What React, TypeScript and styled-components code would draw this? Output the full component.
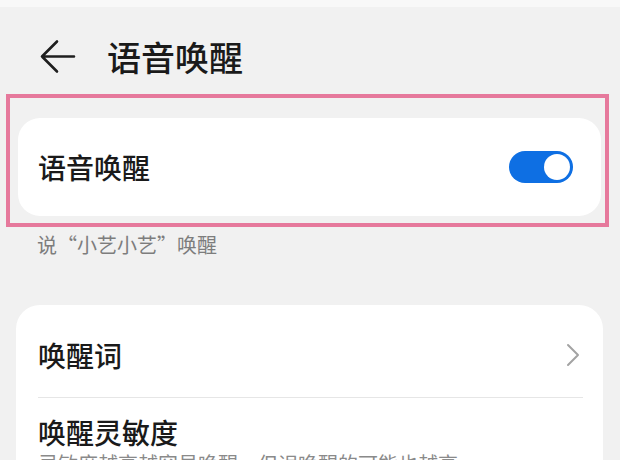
import { createGlobalStyle, styled } from 'styled-components';

const GlobalStyle = createGlobalStyle`
  html, body {
    margin: 0;
    padding: 0;
    background: #f1f1f1;
  }
  body {
    font-family: 'Noto Sans CJK SC', 'Noto Sans', sans-serif;
    color: #1a1a1a;
  }
`;

interface ToggleProps {
  on?: boolean;
}

const BackIcon = () => (
  <svg width="36" height="36" viewBox="0 0 36 36" fill="none">
    <path
      d="M34 17.5H2M17 2.5L2 17.5L17 32.5"
      stroke="#1f1f1f"
      strokeWidth="2.6"
      strokeLinecap="round"
      strokeLinejoin="round"
    />
  </svg>
);

const ChevronIcon = () => (
  <svg width="14" height="24" viewBox="0 0 14 24" fill="none">
    <path
      d="M2 2L12 12L2 22"
      stroke="#a3a3a3"
      strokeWidth="2"
      strokeLinecap="round"
      strokeLinejoin="round"
    />
  </svg>
);

const App = () => {
  return (
    <>
      <GlobalStyle />
      <Page>
        <TopStrip />
        <Header>
          <BackIcon />
          <Title>语音唤醒</Title>
        </Header>

        <Highlight>
          <SwitchCard>
            <ItemLabel>语音唤醒</ItemLabel>
            <Toggle on>
              <Knob />
            </Toggle>
          </SwitchCard>
        </Highlight>
        <Hint>说“小艺小艺”唤醒</Hint>

        <ListCard>
          <LinkRow>
            <ItemLabel>唤醒词</ItemLabel>
            <ChevronIcon />
          </LinkRow>
          <Divider />
          <DetailRow>
            <ItemLabel>唤醒灵敏度</ItemLabel>
            <Description>灵敏度越高越容易唤醒，但误唤醒的可能也越高</Description>
          </DetailRow>
        </ListCard>
      </Page>
    </>
  );
};

const Page = styled.div`
  width: 620px;
  height: 460px;
  overflow: hidden;
  background: #f1f1f1;
`;

const TopStrip = styled.div`
  height: 7px;
  background: #f8f8f8;
`;

const Header = styled.div`
  height: 74px;
  padding: 13px 0 0 40px;
  display: flex;
  align-items: center;
  gap: 31px;
`;

const Title = styled.h1`
  margin: 0;
  font-size: 34px;
  font-weight: 500;
  line-height: 1.2;
  color: #1a1a1a;
`;

const Highlight = styled.div`
  margin: 0 11px 0 6px;
  border: 4px solid #e6799c;
  padding: 20px 4px 7px 8px;
`;

const SwitchCard = styled.div`
  height: 98px;
  padding: 0 28px 0 20px;
  background: #ffffff;
  border-radius: 22px;
  display: flex;
  align-items: center;
  justify-content: space-between;
`;

const ItemLabel = styled.div`
  font-size: 28px;
  font-weight: 500;
  line-height: 28px;
  color: #1a1a1a;
`;

const Toggle = styled.div<ToggleProps>`
  width: 64px;
  height: 32px;
  box-sizing: border-box;
  padding: 3px;
  border-radius: 16px;
  background: ${(props) => (props.on ? '#0e6fe3' : '#c9c9c9')};
  display: flex;
  justify-content: ${(props) => (props.on ? 'flex-end' : 'flex-start')};
`;

const Knob = styled.div`
  width: 26px;
  height: 26px;
  border-radius: 50%;
  background: #ffffff;
`;

const Hint = styled.div`
  margin-top: 4px;
  padding-left: 37px;
  font-size: 20px;
  line-height: 28px;
  color: #7d7d7d;
`;

const ListCard = styled.div`
  margin: 46px 17px 0 16px;
  background: #ffffff;
  border-radius: 24px;
`;

const LinkRow = styled.div`
  padding: 36px 23px 28px 22px;
  display: flex;
  align-items: center;
  justify-content: space-between;
`;

const Divider = styled.div`
  height: 1px;
  margin: 0 20px 0 22px;
  background: #e6e6e6;
`;

const DetailRow = styled.div`
  padding: 20px 22px 20px 22px;
  display: flex;
  flex-direction: column;
  gap: 4px;
`;

const Description = styled.div`
  font-size: 20px;
  line-height: 28px;
  color: #8a8a8a;
  white-space: nowrap;
`;

export default App;
